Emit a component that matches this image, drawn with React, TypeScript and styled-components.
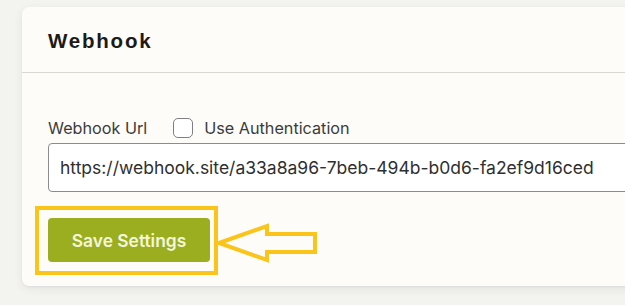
import styled, { createGlobalStyle } from 'styled-components'

const GlobalStyle = createGlobalStyle`
  html, body {
    margin: 0;
    padding: 0;
    background: #f3f3f0;
    overflow: hidden;
  }
  body {
    width: 625px;
    height: 305px;
  }
`

const Card = styled.div`
  margin: 7px 0 0 22px;
  width: 720px;
  background: #fdfcf8;
  border-radius: 7px;
  box-shadow: 0 3px 10px rgba(0, 0, 0, 0.07), 0 1px 2px rgba(0, 0, 0, 0.04);
`

const Header = styled.div`
  height: 66px;
  box-sizing: border-box;
  padding: 0 26px;
  display: flex;
  align-items: center;
  border-bottom: 1px solid #d9d7d1;
`

const Title = styled.h2`
  margin: 2px 0 0;
  font-family: "Liberation Sans", Arial, sans-serif;
  font-weight: 700;
  font-size: 20.5px;
  letter-spacing: 1.8px;
  color: #1d1a17;
`

const Body = styled.div`
  padding: 45px 26px 24px;
  font-family: Inter, "Noto Sans", sans-serif;
`

const LabelRow = styled.div`
  display: flex;
  align-items: center;
  height: 20px;
  margin-bottom: 5px;
  font-size: 16.2px;
  color: #3b3b3b;
`

const Label = styled.span`
  margin-right: 26px;
`

const CheckLabel = styled.label`
  display: flex;
  align-items: center;
  gap: 11px;
  cursor: pointer;
`

const Checkbox = styled.span`
  width: 20px;
  height: 20px;
  box-sizing: border-box;
  border: 1px solid #7f7f7f;
  border-radius: 5px;
  background: #fff;
`

const UrlInput = styled.div`
  height: 49px;
  box-sizing: border-box;
  border: 1px solid #8c8c8c;
  border-radius: 4px;
  background: #fff;
  display: flex;
  align-items: center;
  padding: 0 11px;
  font-size: 17.5px;
  color: #2f2f2f;
  white-space: nowrap;
`

const ButtonWrap = styled.div`
  position: relative;
  margin-top: 26px;
  width: 162px;
`

const SaveButton = styled.button`
  width: 162px;
  height: 44px;
  border: none;
  border-radius: 4px;
  background: #9aae1f;
  color: #f4f6dc;
  font-family: Inter, "Noto Sans", sans-serif;
  font-weight: 600;
  font-size: 17.4px;
  cursor: pointer;
`

const Highlight = styled.div`
  position: absolute;
  left: -13px;
  top: -12px;
  right: -8px;
  bottom: -13px;
  border: 4px solid #fbc41b;
  pointer-events: none;
`

const Arrow = styled.svg`
  position: absolute;
  left: 167px;
  top: 4px;
  overflow: visible;
`

export default function App() {
  return (
    <>
      <GlobalStyle />
      <Card>
        <Header>
          <Title>Webhook</Title>
        </Header>
        <Body>
          <LabelRow>
            <Label>Webhook Url</Label>
            <CheckLabel>
              <Checkbox />
              Use Authentication
            </CheckLabel>
          </LabelRow>
          <UrlInput>https://webhook.site/a33a8a96-7beb-494b-b0d6-fa2ef9d16ced</UrlInput>
          <ButtonWrap>
            <SaveButton>Save Settings</SaveButton>
            <Highlight />
            <Arrow width="108" height="40" viewBox="0 0 108 40">
              <polygon
                points="4,21 52,4 52,12 100,12 100,30 52,30 52,38"
                fill="none"
                stroke="#fbc41b"
                strokeWidth="4"
                strokeLinejoin="miter"
              />
            </Arrow>
          </ButtonWrap>
        </Body>
      </Card>
    </>
  )
}
